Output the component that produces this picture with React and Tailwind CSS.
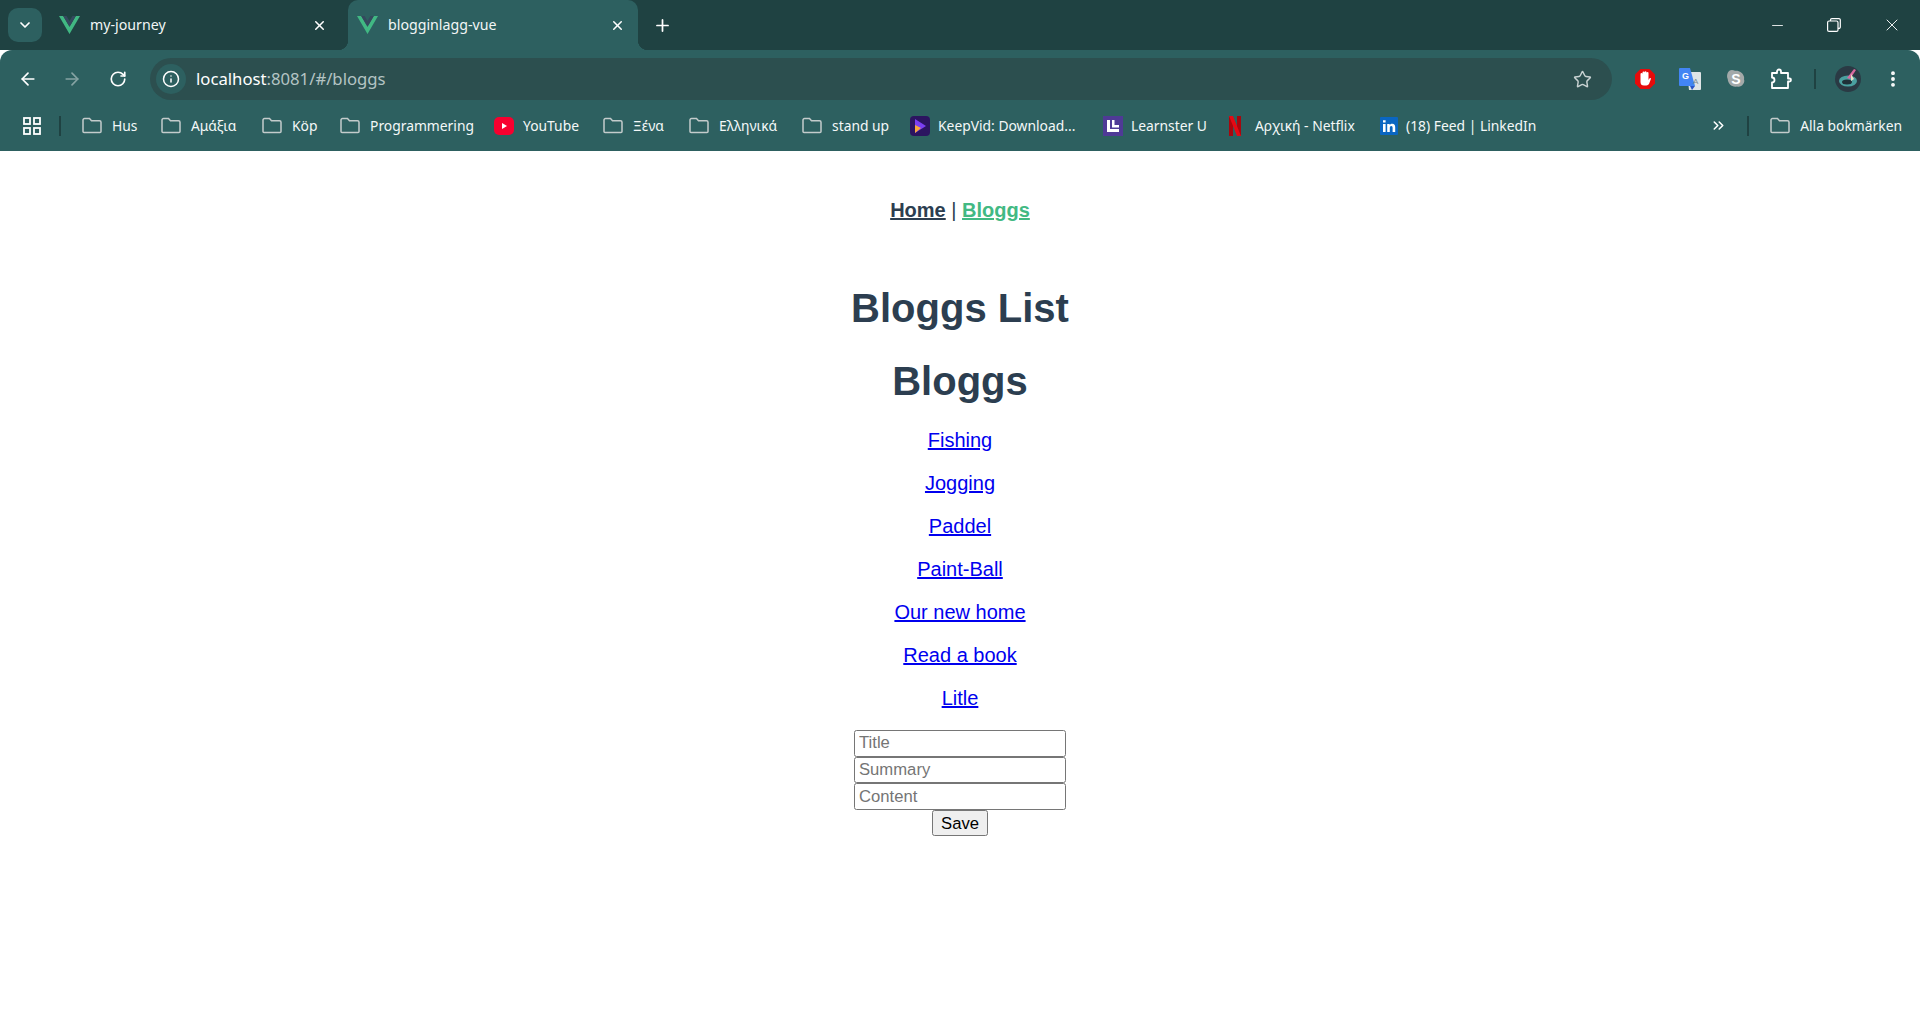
import React from 'react'
import { ArrowLeft, ArrowRight, ChevronDown, ChevronsRight, EllipsisVertical, Info, Minus, Plus, RotateCw, Star, X } from 'lucide-react'

const VueLogo = () => (
  <svg width="21" height="18" viewBox="0 0 21 18" className="shrink-0">
    <path d="M0 0h4.2l6.3 10.8L16.8 0H21L10.5 18z" fill="#41b883" />
    <path d="M4.2 0h3.4l2.9 5 2.9-5h3.4l-6.3 10.8z" fill="#35495e" />
  </svg>
)

const FolderIcon = () => (
  <svg width="20" height="17" viewBox="0 0 20 17" fill="none" stroke="#c4cccc" strokeWidth="1.5" className="shrink-0">
    <path d="M1 3a1.5 1.5 0 0 1 1.5-1.5h5l2 2.2h8A1.5 1.5 0 0 1 19 5.2v9.3a1 1 0 0 1-1 1H2a1 1 0 0 1-1-1z" />
  </svg>
)

const YouTubeIcon = () => (
  <svg width="20" height="20" viewBox="0 0 20 20" className="shrink-0">
    <rect x="0" y="1" width="20" height="18" rx="5" fill="#f8002f" />
    <path d="M8 7l5 3-5 3z" fill="#fff" />
  </svg>
)

const KeepVidIcon = () => (
  <svg width="20" height="20" viewBox="0 0 20 20" className="shrink-0">
    <rect width="20" height="20" rx="4" fill="#2c1460" />
    <path d="M5 3l11 7-11 7z" fill="#7b3ff2" />
    <path d="M5 9l6 3-6 5z" fill="#f9a83a" />
  </svg>
)

const LearnsterIcon = () => (
  <svg width="20" height="20" viewBox="0 0 20 20" className="shrink-0">
    <rect width="20" height="20" fill="#4f3a96" />
    <path d="M4 4h3v9h9v3H4zM9 4h2.5v5H16v2.5H9z" fill="#fff" />
  </svg>
)

const NetflixIcon = () => (
  <svg width="12" height="20" viewBox="0 0 12 20" className="shrink-0">
    <path d="M0 0h4v20l-4 0z" fill="#a8060e" />
    <path d="M8 0h4v20H8z" fill="#a8060e" />
    <path d="M0 0h4l8 20H8z" fill="#e50914" />
  </svg>
)

const LinkedInIcon = () => (
  <svg width="18" height="18" viewBox="0 0 18 18" className="shrink-0">
    <rect width="18" height="18" rx="1" fill="#0a66c2" />
    <path d="M3 7h2.6v8H3zM3 3.2h2.6v2.4H3zM7.2 7h2.5v1.2C10.3 7.300 11.200 6.800 12.300 6.800c2.100 0 2.900 1.300 2.900 3.500V15h-2.600v-4.200c0-1.100-.4-1.800-1.300-1.800-1 0-1.500.7-1.500 1.800V15H7.200z" fill="#fff" />
  </svg>
)

const bookmarks = [
  { label: 'Hus', width: 'w-[26px]', gap: 'gap-[10px]', icon: <FolderIcon /> },
  { label: 'Αμάξια', width: 'w-[48px]', gap: 'gap-[10px]', icon: <FolderIcon /> },
  { label: 'Köp', width: 'w-[25px]', gap: 'gap-[10px]', icon: <FolderIcon /> },
  { label: 'Programmering', width: 'w-[101px]', gap: 'gap-[10px]', icon: <FolderIcon /> },
  { label: 'YouTube', width: 'w-[57px]', gap: 'gap-[9px]', icon: <YouTubeIcon /> },
  { label: 'Ξένα', width: 'w-[33px]', gap: 'gap-[10px]', icon: <FolderIcon /> },
  { label: 'Ελληνικά', width: 'w-[60px]', gap: 'gap-[10px]', icon: <FolderIcon /> },
  { label: 'stand up', width: 'w-[55px]', gap: 'gap-[10px]', icon: <FolderIcon /> },
  { label: 'KeepVid: Download...', width: 'w-[142px]', gap: 'gap-[8px]', icon: <KeepVidIcon /> },
  { label: 'Learnster U', width: 'w-[75px]', gap: 'gap-[8px]', icon: <LearnsterIcon /> },
  { label: 'Αρχική - Netflix', width: 'w-[102px]', gap: 'gap-[14px]', icon: <NetflixIcon /> },
  { label: '(18) Feed | LinkedIn', width: 'w-[128px]', gap: 'gap-[8px]', icon: <LinkedInIcon /> },
]

const posts = ['Fishing', 'Jogging', 'Paddel', 'Paint-Ball', 'Our new home', 'Read a book', 'Litle']

const inputClass = 'h-[26.670px] w-[212px] rounded-[2.500px] border border-[#767676] px-[4px] text-[16.670px] text-black placeholder:text-[#757575]'

const Tab = ({ title, active }) => (
  <div className={`relative flex h-[50px] w-[290px] items-center gap-[10px] ${active ? 'rounded-t-[10px] bg-[#2d6060] pl-[9px] pr-[13px]' : 'pl-[15px] pr-[7px]'}`}>
    {active && (
      <>
        <span className="absolute bottom-0 left-[-10px] h-[10px] w-[10px] bg-[radial-gradient(circle_at_0_0,transparent_10px,#2d6060_10.500px)]" />
        <span className="absolute bottom-0 right-[-10px] h-[10px] w-[10px] bg-[radial-gradient(circle_at_100%_0,transparent_10px,#2d6060_10.500px)]" />
      </>
    )}
    <VueLogo />
    <span className="flex-1 text-[14.200px] text-[#f2f6f6]">{title}</span>
    <X size={15} strokeWidth={2.4} className="text-white" />
  </div>
)

const App = () => {
  return (
    <div className="flex min-h-[1030px] flex-col bg-white font-['Liberation_Sans',sans-serif]">
      <header className="font-['Noto_Sans',sans-serif]">
        {/* tab strip */}
        <div className="flex h-[50px] items-center bg-[#1f4242]">
          <div className="ml-[8px] flex h-[34px] w-[34px] items-center justify-center rounded-[10px] bg-[#2d6060]">
            <ChevronDown size={16} strokeWidth={2.6} className="text-white" />
          </div>
          <div className="ml-[2px] flex w-[304px]">
            <Tab title="my-journey" />
          </div>
          <Tab title="blogginlagg-vue" active />
          <Plus size={19} strokeWidth={2.2} className="ml-[15px] text-white" />
          <div className="ml-auto flex items-center">
            <Minus size={17} strokeWidth={1.2} className="mr-[41px] text-white" />
            <svg width="14" height="14" viewBox="0 0 14 14" fill="none" stroke="#fff" strokeWidth="1.2" className="mr-[41px]">
              <rect x="0.6" y="3" width="10.400" height="10.400" rx="1.500" />
              <path d="M3.500 3V2a1.400 1.400 0 0 1 1.400-1.400h7a1.400 1.400 0 0 1 1.400 1.400v7a1.400 1.400 0 0 1-1.400 1.400H11" />
            </svg>
            <X size={20} strokeWidth={1.1} className="mr-[18px] text-white" />
          </div>
        </div>

        {/* toolbar */}
        <div className="flex h-[50px] items-center rounded-t-[12px] bg-[#2d6060] pt-[8px]">
          <ArrowLeft size={20} strokeWidth={2} className="ml-[18px] text-white" />
          <ArrowRight size={20} strokeWidth={2} className="ml-[24px] text-[#86a3a3]" />
          <RotateCw size={18} strokeWidth={2.2} className="ml-[27px] text-white" />
          <div className="ml-[23px] flex h-[42px] flex-1 items-center rounded-full bg-[#2c4f4f] pl-[6px] pr-[20px]">
            <div className="flex h-[30px] w-[30px] items-center justify-center rounded-full bg-[#2d6060]">
              <Info size={18} strokeWidth={2} className="text-white" />
            </div>
            <span className="ml-[10px] text-[16.700px] text-white">localhost<span className="text-[#b4c4c4]">:8081/#/bloggs</span></span>
            <Star size={19} strokeWidth={1.800} className="ml-auto text-[#c8d2d2]" />
          </div>
          <div className="flex items-center">
            <svg width="22" height="22" viewBox="0 0 22 22" className="ml-[22px]">
              <path d="M6.500 1h9L21 6.500v9L15.500 21h-9L1 15.500v-9z" fill="#e60b0b" />
              <path d="M6.500 10V6a1 1 0 0 1 2 0V4.500a1 1 0 0 1 2 0v-.3a1 1 0 0 1 2 0v.8a1 1 0 0 1 2 0V12l1-1.500c.8-.9 1.800 0 1.300.8L15 16a3 3 0 0 1-2.500 1.500H10A3.500 3.500 0 0 1 6.500 14z" fill="#fff" />
            </svg>
            <svg width="22" height="22" viewBox="0 0 22 22" className="ml-[23px]">
              <path d="M8 4h13a1 1 0 0 1 1 1v16a1 1 0 0 1-1 1H10z" fill="#dfe4e6" />
              <path d="M1 0h10l5 18H1a1 1 0 0 1-1-1V1a1 1 0 0 1 1-1z" fill="#4285f4" />
              <path d="M11 18h5l-3 4z" fill="#2a56c6" />
              <text x="3" y="11" fontSize="9" fontWeight="700" fontFamily="Liberation Sans" fill="#fff">G</text>
              <text x="14" y="16" fontSize="8" fontFamily="Liberation Sans" fill="#7a8a90">A</text>
            </svg>
            <svg width="20" height="20" viewBox="0 0 20 20" className="ml-[25px]">
              <path d="M6 1c1 0 2 .3 3 .8 4-.6 8 2 9 6 .2.800.2 1.700 0 2.500 1.500 3.500-2.500 8.500-7 7.200C6 18.500 2 15 1.700 10 0 6 2 1 6 1z" fill="#a3a9a9" />
              <text x="10" y="15" textAnchor="middle" fontSize="14" fontWeight="700" fontFamily="Liberation Sans" fill="#fff">S</text>
            </svg>
            <svg width="22" height="22" viewBox="0 0 22 22" fill="none" stroke="#fff" strokeWidth="1.800" className="ml-[24px]">
              <path d="M2 5h5V3.500a2 2 0 0 1 4 0V5h7v5.500h1.500a1.500 1.500 0 0 1 0 3H18V20H2v-5.500a2.500 2.500 0 0 0 0-5z" strokeLinejoin="round" />
            </svg>
            <div className="ml-[22px] h-[20px] w-[2px] bg-[#1f4242]" />
            <svg width="26" height="26" viewBox="0 0 26 26" className="ml-[19px]">
              <circle cx="13" cy="13" r="13" fill="#2a3a44" />
              <ellipse cx="13" cy="15" rx="9" ry="5.500" fill="#4aa0a0" />
              <ellipse cx="12" cy="16" rx="5" ry="2.500" fill="#1f3038" />
              <path d="M12 12l7-9 2 1-6 9z" fill="#d86aa0" />
              <path d="M16 8l3 5-3 2z" fill="#e8e0c8" />
            </svg>
            <EllipsisVertical size={20} strokeWidth={2.600} className="ml-[22px] mr-[17px] text-white" />
          </div>
        </div>

        {/* bookmarks bar */}
        <div className="flex h-[51px] items-center bg-[#2d6060] text-[13.850px] leading-none text-[#f4f8f8]">
          <svg width="18" height="18" viewBox="0 0 18 18" fill="none" stroke="#fff" strokeWidth="1.800" className="ml-[23px]">
            <rect x="1" y="1" width="6" height="6" />
            <rect x="11" y="1" width="6" height="6" />
            <rect x="1" y="11" width="6" height="6" />
            <rect x="11" y="11" width="6" height="6" />
          </svg>
          <div className="ml-[18px] h-[20px] w-[2px] bg-[#1f4242]" />
          <nav className="ml-[21px] flex items-center gap-[23px]">
            {bookmarks.map((b) => (
              <div key={b.label} className={`flex items-center ${b.gap}`}>
                {b.icon}
                <span className={`${b.width} whitespace-nowrap`}>{b.label}</span>
              </div>
            ))}
          </nav>
          <div className="ml-auto flex items-center">
            <ChevronsRight size={17} strokeWidth={2.200} className="text-white" />
            <div className="ml-[20px] h-[20px] w-[2px] bg-[#1f4242]" />
            <div className="ml-[21px] flex items-center gap-[10px] pr-[18px]">
              <FolderIcon />
              <span className="whitespace-nowrap">Alla bokmärken</span>
            </div>
          </div>
        </div>
      </header>

      {/* page */}
      <main className="flex flex-col items-center text-center text-[20px] text-[#2c3e50]">
        <div className="pt-[48px] font-bold leading-[23px]">
          <a href="#/" className="underline">Home</a>
          <span className="font-normal"> | </span>
          <a href="#/bloggs" className="text-[#42b983] underline">Bloggs</a>
        </div>
        <h1 className="mt-[63px] text-[40px] font-bold leading-[46px]">Bloggs List</h1>
        <h2 className="mt-[27px] text-[40px] font-bold leading-[46px]">Bloggs</h2>
        <ul className="mt-[25px] flex flex-col gap-[20px]">
          {posts.map((p) => (
            <li key={p} className="leading-[23px]">
              <a href="#" className="text-[#0000ee] underline">{p}</a>
            </li>
          ))}
        </ul>
        <form className="mt-[20px] flex flex-col items-center">
          <input placeholder="Title" className={inputClass} />
          <input placeholder="Summary" className={inputClass} />
          <input placeholder="Content" className={inputClass} />
          <button type="button" className="h-[26px] w-[56px] rounded-[2.500px] border border-[#767676] bg-[#efefef] pb-[2px] text-[16.670px] text-black">Save</button>
        </form>
      </main>
    </div>
  )
}

export default App
